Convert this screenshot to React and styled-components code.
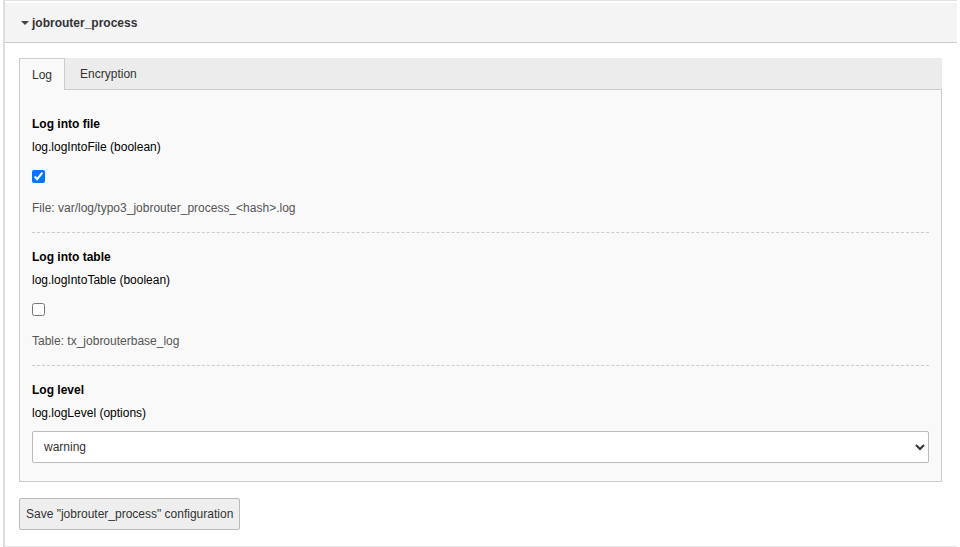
import styled, { createGlobalStyle } from "styled-components";

const Global = createGlobalStyle`
    body {
        margin: 0;
        background: #fff;
        font-family: "Liberation Sans", Arial, sans-serif;
        font-size: 12px;
        color: #333;
    }
`

export default function App() {
    return (
        <>
            <Global />
            <Panel>
                <Header>
                    <Caret />
                    jobrouter_process
                </Header>
                <Body>
                    <Tabs>
                        <TabStrip>
                            <Tab active>Log</Tab>
                            <Tab>Encryption</Tab>
                        </TabStrip>
                        <TabContent>
                            <Section>
                                <Title>Log into file</Title>
                                <Desc>log.logIntoFile (boolean)</Desc>
                                <Check type="checkbox" defaultChecked />
                                <Hint>File: var/log/typo3_jobrouter_process_&lt;hash&gt;.log</Hint>
                            </Section>
                            <Section>
                                <Title>Log into table</Title>
                                <Desc>log.logIntoTable (boolean)</Desc>
                                <Check type="checkbox" />
                                <Hint>Table: tx_jobrouterbase_log</Hint>
                            </Section>
                            <Section last>
                                <Title>Log level</Title>
                                <Desc>log.logLevel (options)</Desc>
                                <Select defaultValue="warning">
                                    <option value="debug">debug</option>
                                    <option value="info">info</option>
                                    <option value="notice">notice</option>
                                    <option value="warning">warning</option>
                                    <option value="error">error</option>
                                </Select>
                            </Section>
                        </TabContent>
                    </Tabs>
                    <SaveButton>Save "jobrouter_process" configuration</SaveButton>
                </Body>
            </Panel>
        </>
    );
}

const Panel = styled.div`
    margin-left: 3px;
    width: 952px;
    border-top: 1px solid #e2e2e2;
    border-left: 2px solid #ddd;
    border-bottom: 2px solid #e6e6e6;
    padding-top: 2px;
`

const Header = styled.div`
    height: 39px;
    background: #f4f4f4;
    border-bottom: 1px solid #ccc;
    display: flex;
    align-items: center;
    padding-left: 16px;
    font-weight: bold;
    color: #333;
`

const Caret = styled.span`
    width: 0;
    height: 0;
    border-left: 4px solid transparent;
    border-right: 4px solid transparent;
    border-top: 4px solid #444;
    margin-right: 3px;
    margin-top: 1px;
`

const Body = styled.div`
    padding: 15px 13px 16px 14px;
`

const Tabs = styled.div`
    width: 923px;
`

const TabStrip = styled.div`
    height: 32px;
    box-sizing: border-box;
    background: #ececec;
    display: flex;
    border-bottom: 1px solid #ccc;
`

const Tab = styled.div`
    display: flex;
    align-items: center;
    padding: 0 ${(p) => (p.active ? "12px" : "14px")};
    height: ${(p) => (p.active ? "32px" : "31px")};
    box-sizing: border-box;
    background: ${(p) => (p.active ? "#f9f9f9" : "transparent")};
    border: ${(p) => (p.active ? "1px solid #ccc" : "1px solid transparent")};
    border-bottom: none;
    color: #333;
    cursor: pointer;
`

const TabContent = styled.div`
    background: #f9f9f9;
    border: 1px solid #ccc;
    border-top: none;
    padding: 10px 12px 8px 12px;
`

const Section = styled.div`
    padding: 15px 0 ${(p) => (p.last ? "10px" : "15px")};
    border-bottom: ${(p) => (p.last ? "none" : "1px dashed #ccc")};
    display: flex;
    flex-direction: column;
    align-items: flex-start;
`

const Title = styled.div`
    font-weight: bold;
    line-height: 18px;
    color: #000;
`

const Desc = styled.div`
    line-height: 18px;
    margin-top: 5px;
    color: #000;
`

const Check = styled.input`
    width: 13px;
    height: 13px;
    margin: 14px 0 0 0;
    accent-color: #0075ff;
`

const Hint = styled.div`
    line-height: 18px;
    margin-top: 16px;
    color: #555;
`

const Select = styled.select`
    margin-top: 9px;
    width: 100%;
    height: 32px;
    border: 1px solid #bbb;
    border-radius: 2px;
    background: #fff;
    padding: 0 7px;
    font-family: "Liberation Sans", Arial, sans-serif;
    font-size: 12px;
    color: #333;
`

const SaveButton = styled.button`
    margin-top: 16px;
    height: 32px;
    padding: 0 6px;
    background: #eee;
    border: 1px solid #bbb;
    border-radius: 2px;
    font-family: "Liberation Sans", Arial, sans-serif;
    font-size: 12px;
    color: #333;
    cursor: pointer;
`
